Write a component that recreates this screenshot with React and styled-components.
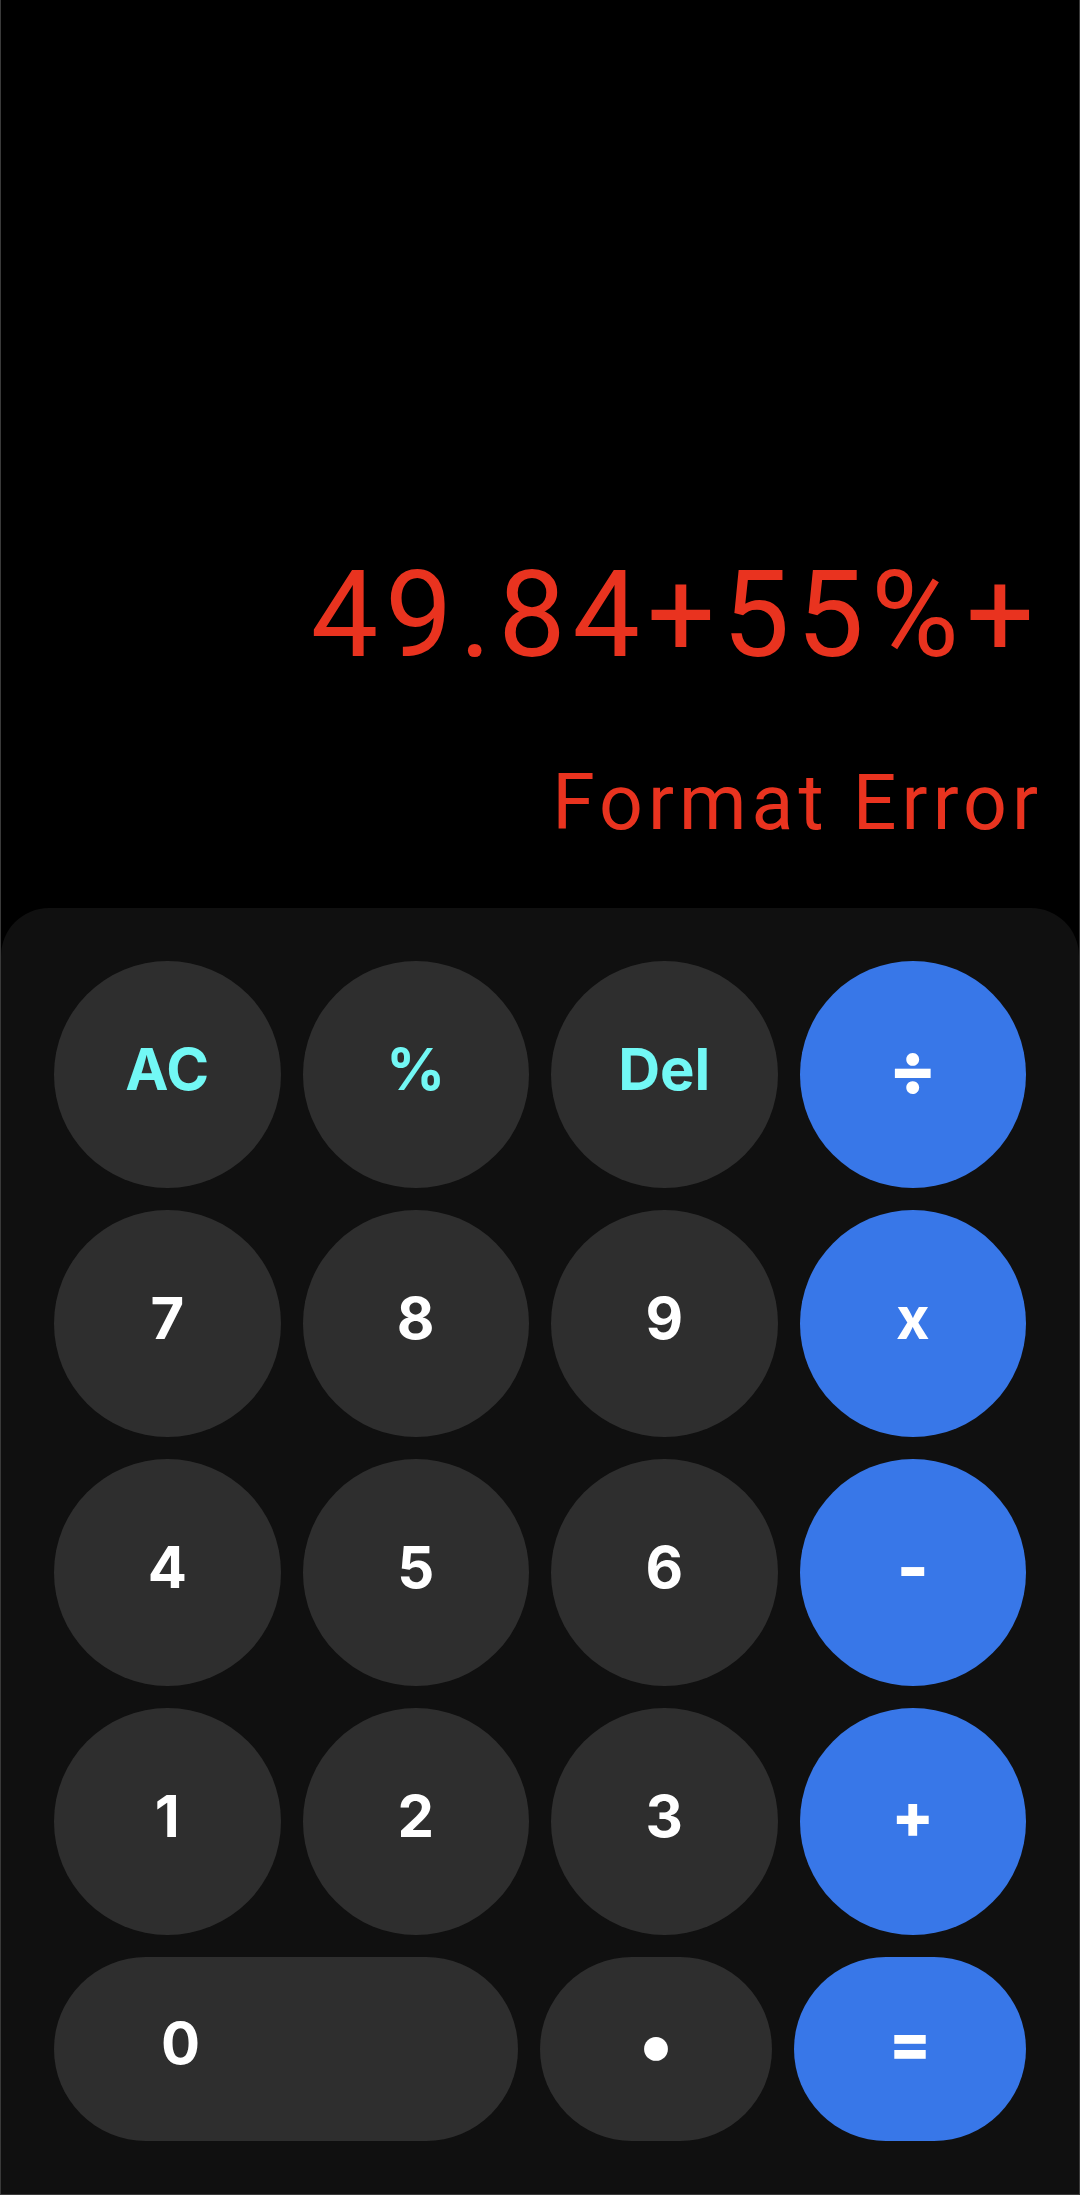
import React from "react";
import styled, { createGlobalStyle } from "styled-components";

const GlobalStyle = createGlobalStyle`
  html, body {
    margin: 0;
    padding: 0;
    background: #000;
  }
  * {
    box-sizing: border-box;
  }
`;

const Screen = styled.div`
  width: 1080px;
  min-height: 2195px;
  display: flex;
  flex-direction: column;
  background: #000;
  border: 1px solid #3a3a3a;
  border-top: none;
`;

const Display = styled.div`
  flex: 1;
  display: flex;
  flex-direction: column;
  justify-content: flex-end;
  align-items: flex-end;
  padding: 0 44px 66px 0;
  font-family: Roboto, "Liberation Sans", sans-serif;
  font-weight: 400;
  color: #e9331f;
`;

const Expression = styled.div`
  font-size: 120px;
  line-height: 1;
  letter-spacing: 7px;
  margin: 0 -6px 90px 0;
  white-space: nowrap;
`;

const Result = styled.div`
  font-size: 77px;
  line-height: 1;
  letter-spacing: 5px;
  margin-right: -8px;
  white-space: nowrap;
`;

const Pad = styled.div`
  background: #101010;
  border-radius: 48px 48px 0 0;
  padding: 53px;
  display: flex;
  flex-direction: column;
  gap: 22px;
`;

const Grid = styled.div`
  display: grid;
  grid-template-columns: repeat(4, 1fr);
  gap: 22px;
`;

const BottomRow = styled.div`
  display: grid;
  grid-template-columns: minmax(0, 2fr) minmax(0, 1fr) minmax(0, 1fr);
  gap: 22px;
`;

const palette = {
  fn: { bg: "#2e2e2e", fg: "#72f8f5" },
  num: { bg: "#2e2e2e", fg: "#ffffff" },
  op: { bg: "#3877e8", fg: "#ffffff" },
};

const Key = styled.button`
  border: none;
  margin: 0;
  padding: 0 0 12px;
  height: ${(p) => (p.$short ? "184px" : "227px")};
  border-radius: ${(p) => (p.$short ? "92px" : "50%")};
  background: ${(p) => palette[p.$kind].bg};
  color: ${(p) => palette[p.$kind].fg};
  font-family: Inter, "Liberation Sans", sans-serif;
  font-weight: 700;
  font-size: 58px;
  line-height: 1;
  display: flex;
  align-items: center;
  justify-content: ${(p) => (p.$left ? "flex-start" : "center")};
`;

// operator glyphs are drawn larger and heavier than the digits
const Sign = styled.span`
  font-size: ${(p) => p.$size}px;
  font-weight: 800;
`;

const ZeroLabel = styled.span`
  margin-left: 107px;
`;

const Dot = styled.span`
  font-size: 76px;
`;

const rows = [
  [["AC", "fn"], ["%", "fn"], ["Del", "fn"], ["÷", "op", 70]],
  [["7", "num"], ["8", "num"], ["9", "num"], ["x", "op"]],
  [["4", "num"], ["5", "num"], ["6", "num"], ["-", "op", 68]],
  [["1", "num"], ["2", "num"], ["3", "num"], ["+", "op", 62]],
];

export default function App() {
  return (
    <>
      <GlobalStyle />
      <Screen>
        <Display>
          <Expression>49.84+55%+</Expression>
          <Result>Format Error</Result>
        </Display>
        <Pad>
          <Grid>
            {rows.flat().map(([label, kind, size], i) => (
              <Key key={i} $kind={kind}>
                {size ? <Sign $size={size}>{label}</Sign> : label}
              </Key>
            ))}
          </Grid>
          <BottomRow>
            <Key $kind="num" $short $left>
              <ZeroLabel>0</ZeroLabel>
            </Key>
            <Key $kind="num" $short>
              <Dot>•</Dot>
            </Key>
            <Key $kind="op" $short>
              <Sign $size={62}>=</Sign>
            </Key>
          </BottomRow>
        </Pad>
      </Screen>
    </>
  );
}
